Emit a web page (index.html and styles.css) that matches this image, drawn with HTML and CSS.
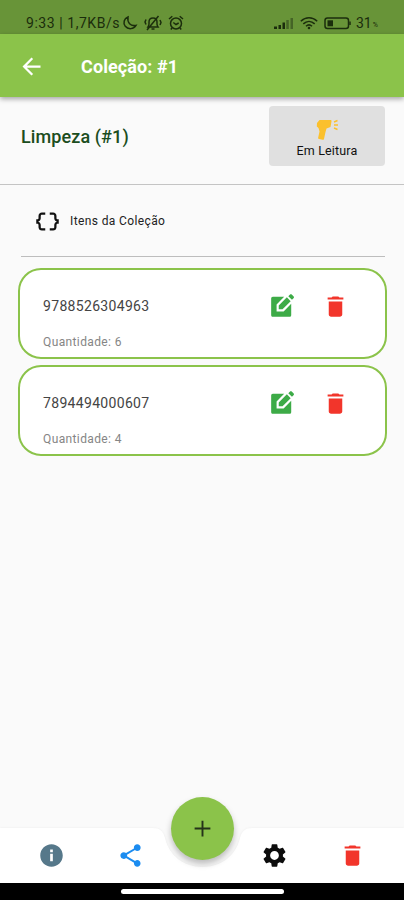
FILE: index.html
```
<!DOCTYPE html>
<html lang="pt-BR">
<head>
<meta charset="utf-8">
<meta name="viewport" content="width=device-width, initial-scale=1">
<title>Coleção: #1</title>
<link rel="stylesheet" href="styles.css">
</head>
<body>

<!-- icons used more than once -->
<svg class="defs">
  <symbol id="trash" viewBox="0 0 24 24">
    <path d="M6 7.500h12v11.700c0 1-.8 1.800-1.800 1.800H7.800c-1 0-1.800-.8-1.800-1.800zM19 4h-3.500l-1-1h-5l-1 1H5v1.700h14z"/>
  </symbol>
  <symbol id="edit" viewBox="0 0 24 24">
    <path d="M3.500 3.500H14L7 10.500v6.500h6.500l7-7V20.500c0 .8-.7 1.500-1.500 1.500H3.500C2.700 22 2 21.300 2 20.500V5c0-.8.7-1.500 1.500-1.500z"/>
    <path d="M9 11.500 16.500 4l3.500 3.500-7.500 7.500H9zM17.800 2.900l1.400-1.400c.6-.6 1.400-.6 2 0l1.400 1.400c.6.600.6 1.400 0 2l-1.400 1.400z"/>
  </symbol>
</svg>

<div class="status">
  <span class="clock">9:33 | 1,7KB/s</span>
  <svg class="moon" viewBox="0 0 16 16"><path d="M6 2C2 3.500.8 8 3.300 11.300c2.800 3.500 8.500 3 10.700-.9C8.500 11.600 5 7.500 6 2z"/></svg>
  <svg class="mute" viewBox="0 0 18 16"><path d="M4 12h10c-1.500-2-1-3-1-5 0-2.500-1.500-4-4-4S5 4.500 5 7c0 2 .5 3-1 5zM7.500 14h3M14.500 1 3 15M2 4.500 1 7l1 2.500M16 5l1 2.500-1 2.500"/></svg>
  <svg class="alarm" viewBox="0 0 16 16"><circle cx="8" cy="8.500" r="5.500"/><path d="M1 4l3.300-2.800M15 4l-3.300-2.800M5.300 7.500 8 9.500l2.700-1.500M4 13l-1.200 1.500M12 13l1.200 1.500"/></svg>
  <svg class="signal" viewBox="0 0 20 12"><path d="M0 9.500h3V12H0zM4.500 8h2.500v4H4.500zM8.500 5.500H11V12H8.500z"/><path class="weak" d="M12.300 3h2.500v9h-2.500zM16.500 1H19v11h-2.500z"/></svg>
  <svg class="wifi" viewBox="0 0 18 14"><path d="M.8 5.200c5-4.600 11.400-4.600 16.400 0M3.300 7.900c3.400-3.300 8-3.300 11.400 0M6 10.300c1.800-1.700 4.200-1.700 6 0"/><circle cx="9" cy="12" r="1.300"/></svg>
  <svg class="battery" viewBox="0 0 28 13"><rect x="1" y="1" width="23.500" height="10.500" rx="2.500"/><path d="M26 4.500v3.500"/><path class="charge" d="M3.500 3.300h5.500v6H3.500z"/></svg>
  <span class="level">31</span><span class="percent">%</span>
</div>

<header class="appbar">
  <svg class="back" viewBox="0 0 24 24"><path d="M20 11H7.830l5.590-5.590L12 4l-8 8 8 8 1.410-1.410L7.830 13H20z"/></svg>
  <h1>Coleção: #1</h1>
</header>

<section class="heading">
  <h2>Limpeza (#1)</h2>
  <button class="reading">
    <svg viewBox="0 0 24 22">
      <path d="M4 1h11c1 0 1 .5 1 1.500L15 8l-4 1.500L10 13l-1.500 7c-.2.800-.8 1-1.500.8L3.500 20c-.8-.2-1-.8-.8-1.500L4 12.500 3 9 1.300 7.500 1.500 4z"/>
      <path class="rays" d="M18.500 3 22 1.500M18.500 6h4M18.500 9l3.500 1.500"/>
    </svg>
    <span>Em Leitura</span>
  </button>
</section>

<main>
  <div class="section-title">
    <svg viewBox="0 0 24 24"><path d="M4 7v2c0 .55-.45 1-1 1H2v4h1c.55 0 1 .45 1 1v2c0 1.650 1.350 3 3 3h3v-2H7c-.55 0-1-.45-1-1v-2c0-1.300-.84-2.420-2-2.830v-.34C5.160 11.420 6 10.300 6 9V7c0-.55.45-1 1-1h3V4H7C5.350 4 4 5.350 4 7zM21 10c-.55 0-1-.45-1-1V7c0-1.650-1.350-3-3-3h-3v2h3c.55 0 1 .45 1 1v2c0 1.300.84 2.420 2 2.830v.34c-1.160.41-2 1.520-2 2.830v2c0 .55-.45 1-1 1h-3v2h3c1.650 0 3-1.350 3-3v-2c0-.55.45-1 1-1h1v-4z"/></svg>
    <span>Itens da Coleção</span>
  </div>

  <div class="item">
    <div class="info">
      <div class="code">9788526304963</div>
      <div class="amount">Quantidade: 6</div>
    </div>
    <svg class="edit"><use href="#edit"/></svg>
    <svg class="trash"><use href="#trash"/></svg>
  </div>

  <div class="item">
    <div class="info">
      <div class="code">7894494000607</div>
      <div class="amount">Quantidade: 4</div>
    </div>
    <svg class="edit"><use href="#edit"/></svg>
    <svg class="trash"><use href="#trash"/></svg>
  </div>
</main>

<nav class="bottom">
  <!-- bar background with the notch for the round button -->
  <svg class="bar" viewBox="0 0 404 55"><path d="M0 0h152c8 0 11 3 13 10 4 17 18 29 37.500 29s33.500-12 37.500-29c2-7 5-10 13-10h151v55H0z"/></svg>
  <button class="add"><svg viewBox="0 0 24 24"><path d="M19 12.850h-6.150V19h-1.700v-6.150H5v-1.700h6.150V5h1.700v6.150H19z"/></svg></button>
  <svg class="about" viewBox="0 0 24 24"><path d="M12 2C6.480 2 2 6.480 2 12s4.480 10 10 10 10-4.480 10-10S17.520 2 12 2zm1.200 15h-2.400v-6.500h2.400zm0-8h-2.400V6.600h2.400z"/></svg>
  <svg class="share" viewBox="0 0 24 24"><path d="M18 16.080c-.76 0-1.440.3-1.960.77L8.910 12.700c.05-.23.09-.46.09-.7s-.04-.47-.09-.7l7.050-4.110c.54.500 1.250.810 2.040.810 1.660 0 3-1.340 3-3s-1.340-3-3-3-3 1.340-3 3c0 .24.040.470.090.700L8.040 9.810C7.500 9.310 6.790 9 6 9c-1.660 0-3 1.340-3 3s1.340 3 3 3c.79 0 1.500-.31 2.040-.81l7.120 4.160c-.05.210-.08.430-.08.650 0 1.610 1.310 2.920 2.920 2.920s2.920-1.310 2.920-2.920-1.310-2.920-2.920-2.920z"/></svg>
  <svg class="settings" viewBox="0 0 24 24"><path d="M19.430 12.980c.04-.32.070-.64.070-.98s-.03-.66-.07-.98l2.110-1.650c.19-.15.240-.42.120-.64l-2-3.460c-.12-.22-.39-.3-.61-.22l-2.490 1c-.52-.4-1.080-.73-1.690-.98l-.38-2.650C14.460 2.180 14.250 2 14 2h-4c-.25 0-.46.180-.49.420l-.38 2.650c-.61.250-1.170.590-1.690.98l-2.490-1c-.23-.09-.49 0-.61.220l-2 3.460c-.13.220-.07.490.12.640l2.110 1.650c-.04.320-.07.650-.07.980s.03.660.07.980l-2.110 1.650c-.19.150-.24.420-.12.640l2 3.460c.12.220.39.300.61.220l2.490-1c.52.400 1.080.730 1.690.980l.38 2.650c.03.240.24.420.49.420h4c.25 0 .46-.18.490-.42l.38-2.650c.61-.25 1.170-.59 1.690-.98l2.490 1c.23.090.49 0 .61-.22l2-3.460c.12-.22.070-.49-.12-.64zM12 15.900c-2.150 0-3.900-1.750-3.900-3.900s1.750-3.900 3.900-3.900 3.900 1.750 3.900 3.900-1.750 3.900-3.900 3.900z"/></svg>
  <svg class="remove"><use href="#trash"/></svg>
</nav>

<div class="gesture"><div class="handle"></div></div>

</body>
</html>
```
FILE: styles.css
```
* {
  box-sizing: border-box;
}
body {
  margin: 0;
  height: 900px;
  display: flex;
  flex-direction: column;
  overflow: hidden;
  background: #fafafa;
  font-family: Roboto, sans-serif;
}
svg {
  display: block;
  flex: none;
}
button {
  border: none;
  padding: 0;
  font-family: inherit;
}
.defs {
  display: none;
}

/* android status bar */
.status {
  height: 34px;
  display: flex;
  align-items: center;
  padding: 12px 0 0 26px;
  background: #689438;
  color: #1b2d0c;
  fill: #1b2d0c;
  font-size: 14px;
}
.clock {
  width: 96px;
  white-space: nowrap;
  letter-spacing: 0.55px;
}
.moon, .mute, .alarm, .wifi, .battery {
  fill: none;
  stroke: #1b2d0c;
  stroke-width: 1.5;
}
.moon {
  width: 16px;
  height: 16px;
}
.mute {
  width: 18px;
  height: 16px;
  margin-left: 6px;
}
.alarm {
  width: 16px;
  height: 16px;
  margin-left: 6px;
}
.signal {
  width: 20px;
  height: 12px;
  margin-left: 90px;
}
.weak {
  fill: #456426;
}
.wifi {
  width: 18px;
  height: 14px;
  margin-left: 6px;
}
.wifi circle {
  fill: #1b2d0c;
  stroke: none;
}
.battery {
  width: 28px;
  height: 13px;
  margin-left: 6px;
}
.charge {
  fill: #1b2d0c;
  stroke: none;
}
.level {
  margin-left: 4px;
}
.percent {
  margin-left: 1px;
  padding-top: 3px;
  font-size: 7px;
}

.appbar {
  height: 63px;
  display: flex;
  align-items: center;
  padding: 1px 0 0 18px;
  background: #8bc34a;
  box-shadow: 0 2px 5px rgba(0, 0, 0, 0.35);
  z-index: 1;
}
.back {
  width: 27px;
  height: 27px;
  fill: #fff;
}
h1 {
  margin: 0 0 0 36px;
  color: #fff;
  font-size: 18px;
  font-weight: 700;
  letter-spacing: 0.1px;
}

.heading {
  height: 88px;
  display: flex;
  justify-content: space-between;
  padding: 9px 19px 0 21px;
  border-bottom: 1px solid #c4c4c4;
}
h2 {
  margin: 20px 0 0;
  color: #1b4d20;
  font-size: 18px;
  font-weight: 500;
  line-height: 22px;
  letter-spacing: 0.1px;
}
.reading {
  width: 116px;
  height: 60px;
  display: flex;
  flex-direction: column;
  align-items: center;
  padding-top: 13px;
  border-radius: 4px;
  background: #e0e0e0;
  color: #111;
  font-size: 12.5px;
  line-height: 15px;
  letter-spacing: 0.15px;
}
.reading svg {
  width: 25px;
  height: 22px;
  margin-bottom: 2px;
  fill: #fbc02d;
}
.rays {
  stroke: #fbc02d;
  stroke-width: 1.4;
}

main {
  flex: 1;
  padding: 0 17px 0 18px;
}
.section-title {
  height: 72px;
  display: flex;
  align-items: center;
  margin: 0 2px 11px 3px;
  padding: 1px 0 0 13px;
  border-bottom: 1px solid #bdbdbd;
  color: #222;
  font-size: 12px;
  letter-spacing: 0.38px;
}
.section-title svg {
  width: 27px;
  height: 27px;
  margin-right: 9px;
  fill: #111;
}
.item {
  height: 91px;
  display: flex;
  margin-bottom: 6px;
  padding-left: 23px;
  border: 2px solid #8bc34a;
  border-radius: 23px;
  background: #fff;
}
.info {
  width: 226px;
  padding-top: 26px;
}
.code {
  color: #444;
  font-size: 14px;
  line-height: 20px;
  letter-spacing: 0.32px;
}
.amount {
  margin-top: 18px;
  color: #858585;
  font-size: 12px;
  line-height: 16px;
  letter-spacing: 0.38px;
}
.edit {
  width: 26px;
  height: 26px;
  margin-top: 23px;
  fill: #3dab47;
}
.trash {
  width: 27px;
  height: 27px;
  margin: 23px 0 0 27px;
  fill: #f2352b;
}

/* bottom bar */
.bottom {
  position: relative;
  height: 55px;
  display: flex;
  align-items: center;
  padding-left: 38px;
}
.bottom > svg {
  width: 27px;
  height: 27px;
  position: relative;
}
.bottom > .bar {
  width: 404px;
  height: 55px;
  position: absolute;
  top: 0;
  left: 0;
  fill: #fff;
  overflow: visible;
  filter: drop-shadow(0 0 1px rgba(0, 0, 0, 0.06));
}
.add {
  position: absolute;
  top: -31px;
  left: 171px;
  width: 63px;
  height: 63px;
  display: flex;
  align-items: center;
  justify-content: center;
  border-radius: 50%;
  background: #8bc34a;
  box-shadow: 0 4px 6px rgba(0, 0, 0, 0.25);
  z-index: 1;
}
.add svg {
  width: 27px;
  height: 27px;
  fill: #24331a;
}
.about {
  fill: #56788a;
}
.share {
  margin-left: 52px;
  fill: #1b8cf0;
}
.settings {
  margin-left: 117px;
  fill: #0c0c0c;
}
.remove {
  margin-left: 51px;
  fill: #f2352b;
}

.gesture {
  height: 17px;
  display: flex;
  justify-content: center;
  align-items: center;
  background: #000;
}
.handle {
  width: 163px;
  height: 5px;
  border-radius: 3px;
  background: #fff;
}
```
